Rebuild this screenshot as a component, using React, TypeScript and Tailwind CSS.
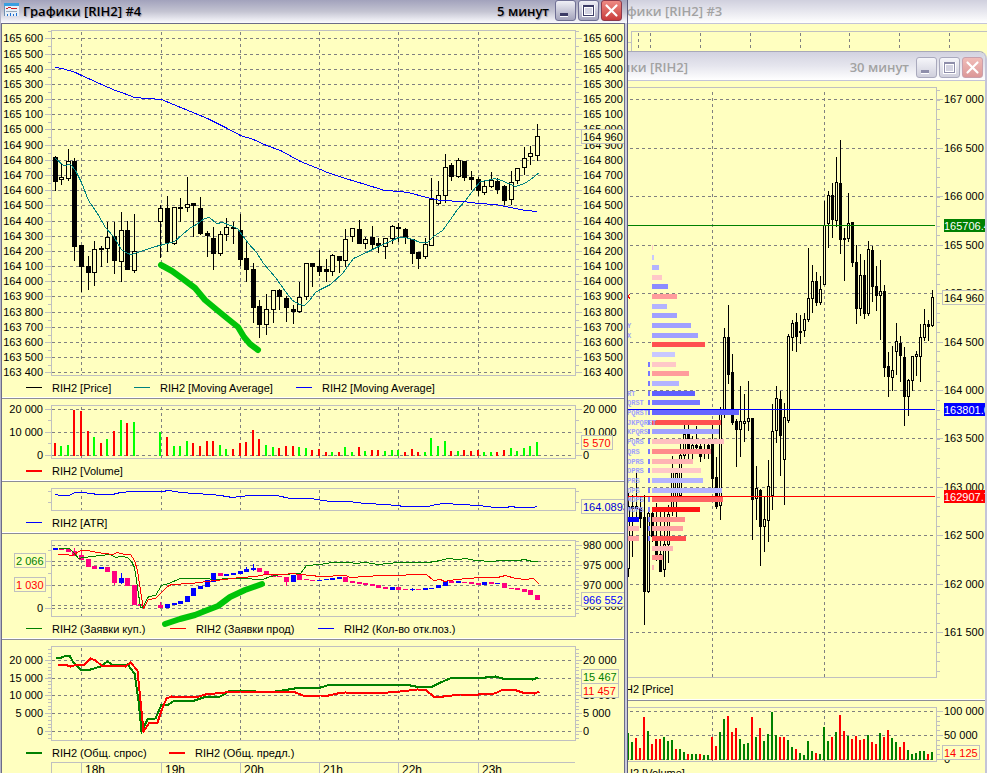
import React from "react";

type Pt = [number, number];
/** slot, high, body top, body bottom, low, filled */
type Candle = [number, number, number, number, number, 0 | 1];

const HOURS = [81, 161, 240, 319, 398, 478];
const GRID = "#808080";
const FRAME = "#c0c0c0";
const GREEN = "#008000";
const FONT = "font-['Liberation_Sans',sans-serif] text-[11px]";

/** x centre of a five-minute slot, counted from 18h */
const slotX = (n: number) => Math.round(81 + 6.61 * n);
/** finer units of the half-hour chart: three to a pixel */
const ux = (v: number) => 620 + Math.floor(v / 3);
const uy = (v: number) => 240 + Math.floor(v / 3);

const PRICE: Candle[] = [
  [-4, 156, 157, 181, 190, 1], [-3, 163, 177, 179, 184, 0], [-2, 149, 161, 178, 180, 0], [-1, 158, 161, 246, 260, 1],
  [0, 245, 245, 266, 291, 1], [1, 256, 266, 272, 289, 1], [2, 241, 249, 272, 285, 0], [3, 246, 248, 249, 266, 1],
  [4, 222, 237, 248, 262, 0], [5, 222, 236, 260, 273, 1], [6, 212, 230, 261, 281, 0], [7, 221, 230, 269, 269, 1],
  [8, 214, 251, 270, 272, 0], [12, 205, 208, 221, 257, 0], [13, 196, 208, 242, 251, 1], [14, 207, 207, 243, 244, 0],
  [15, 198, 207, 208, 221, 1], [16, 177, 204, 207, 211, 0], [17, 203, 203, 205, 236, 1], [18, 197, 208, 233, 234, 1],
  [19, 231, 233, 235, 256, 1], [20, 227, 238, 253, 269, 1], [21, 231, 234, 253, 255, 0], [22, 218, 227, 234, 240, 0],
  [23, 222, 227, 228, 243, 1], [24, 214, 230, 259, 265, 1], [25, 241, 258, 269, 281, 1], [26, 263, 269, 307, 322, 1],
  [27, 300, 306, 324, 337, 1], [28, 294, 309, 324, 334, 0], [29, 290, 290, 309, 322, 0], [30, 289, 290, 296, 309, 1],
  [31, 296, 298, 307, 321, 1], [32, 305, 309, 311, 323, 1], [33, 282, 297, 311, 312, 0], [34, 263, 263, 296, 299, 0],
  [35, 263, 263, 266, 286, 1], [36, 250, 266, 271, 275, 1], [37, 259, 269, 271, 281, 1], [38, 254, 255, 271, 275, 0],
  [39, 256, 256, 260, 272, 1], [40, 229, 239, 260, 266, 0], [41, 228, 228, 236, 241, 0], [42, 220, 229, 243, 243, 1],
  [43, 237, 239, 243, 248, 0], [44, 226, 237, 244, 248, 1], [45, 238, 243, 245, 252, 1], [46, 238, 238, 246, 258, 0],
  [47, 225, 226, 238, 243, 0], [48, 223, 227, 228, 241, 1], [49, 228, 229, 237, 243, 1], [50, 239, 239, 253, 263, 1],
  [51, 252, 252, 258, 268, 1], [52, 238, 244, 256, 258, 0], [53, 178, 199, 245, 245, 0], [54, 181, 195, 203, 204, 0],
  [55, 154, 167, 195, 202, 0], [56, 163, 165, 176, 180, 1], [57, 158, 160, 176, 177, 0], [58, 161, 161, 177, 180, 1],
  [59, 171, 177, 179, 189, 1], [60, 177, 179, 190, 195, 1], [61, 181, 186, 192, 194, 0], [62, 172, 180, 186, 187, 0],
  [63, 178, 181, 189, 193, 1], [64, 185, 186, 200, 204, 1], [65, 171, 182, 199, 204, 0], [66, 168, 168, 180, 183, 0],
  [67, 147, 158, 167, 174, 0], [68, 146, 153, 156, 164, 0], [69, 124, 136, 155, 160, 0],
];

const MA_SLOW: Pt[] = [[55, 67], [62, 68], [75, 72], [81, 75], [88, 78], [101, 84], [115, 90], [121, 92], [134, 97], [161, 99], [173, 104], [190, 111], [207, 118], [225, 127], [240, 135], [253, 139], [266, 145], [280, 150], [300, 161], [320, 169], [327, 172], [345, 178], [365, 184], [384, 190], [400, 191], [412, 193], [422, 196], [440, 200], [462, 201], [478, 203], [495, 204], [515, 208], [525, 210], [537, 211]];
const MA_FAST: Pt[] = [[55, 158], [63, 165], [70, 164], [75, 170], [81, 182], [88, 200], [97, 213], [105, 227], [113, 236], [121, 249], [127, 253], [131, 254], [143, 250], [155, 246], [163, 244], [174, 241], [182, 234], [189, 228], [196, 224], [204, 218], [209, 217], [216, 223], [222, 222], [230, 225], [237, 228], [242, 235], [248, 243], [256, 252], [263, 263], [275, 277], [285, 291], [292, 300], [299, 304], [304, 305], [309, 300], [315, 292], [320, 289], [330, 284], [342, 273], [353, 258], [366, 252], [380, 245], [392, 240], [398, 237], [405, 237], [412, 239], [420, 242], [427, 242], [433, 236], [442, 230], [450, 219], [457, 209], [465, 200], [475, 187], [480, 181], [487, 180], [494, 178], [501, 180], [508, 183], [515, 186], [524, 183], [530, 179], [539, 172]];
const ATR: Pt[] = [[55, 494], [60, 495], [69, 495], [74, 492], [82, 492], [98, 494], [112, 494], [120, 492], [132, 491], [162, 491], [168, 490], [180, 492], [195, 493], [210, 494], [220, 495], [232, 497], [240, 496], [250, 495], [276, 495], [290, 498], [310, 498], [322, 500], [330, 501], [348, 501], [365, 503], [385, 504], [405, 506], [428, 506], [435, 504], [445, 503], [460, 504], [478, 505], [495, 507], [505, 507], [511, 506], [517, 507], [532, 507], [537, 506]];
const BIDS: Pt[] = [[58, 548], [69, 548], [74, 553], [78, 558], [83, 557], [92, 556], [100, 555], [110, 554], [115, 557], [121, 556], [127, 557], [131, 561], [134, 567], [136, 580], [140, 607], [142, 607], [148, 596], [155, 595], [161, 585], [168, 583], [180, 578], [208, 578], [213, 580], [225, 578], [240, 578], [262, 579], [270, 576], [280, 574], [300, 573], [306, 565], [320, 564], [332, 562], [350, 562], [355, 563], [365, 562], [378, 564], [398, 562], [428, 562], [440, 560], [447, 558], [458, 559], [465, 558], [475, 560], [492, 561], [500, 560], [518, 560], [524, 559], [532, 561], [537, 561]];
const ASKS: Pt[] = [[57, 554], [65, 554], [72, 555], [80, 550], [87, 550], [97, 552], [112, 554], [117, 552], [124, 554], [130, 554], [134, 560], [137, 570], [140, 590], [143, 608], [148, 599], [155, 598], [162, 591], [167, 586], [171, 584], [190, 583], [215, 580], [240, 577], [255, 576], [265, 574], [285, 574], [290, 573], [320, 576], [345, 575], [350, 577], [380, 575], [402, 575], [410, 574], [426, 574], [433, 580], [440, 579], [444, 581], [455, 579], [468, 578], [480, 577], [497, 577], [505, 575], [515, 578], [525, 579], [533, 578], [539, 584]];
const DEMAND: Pt[] = [[55, 657], [61, 657], [66, 655], [69, 655], [73, 662], [80, 669], [90, 669], [100, 666], [107, 661], [113, 665], [127, 664], [134, 673], [138, 700], [141, 731], [147, 719], [155, 718], [161, 704], [168, 704], [174, 700], [194, 700], [203, 697], [220, 696], [228, 691], [240, 690], [255, 691], [275, 691], [288, 689], [300, 687], [320, 687], [330, 684], [405, 684], [415, 686], [432, 686], [440, 682], [452, 677], [485, 677], [495, 676], [502, 678], [525, 678], [532, 679], [538, 677]];
const SUPPLY: Pt[] = [[57, 664], [64, 664], [70, 666], [77, 664], [84, 664], [90, 658], [95, 660], [101, 665], [115, 665], [125, 666], [130, 662], [137, 670], [140, 700], [143, 731], [149, 722], [157, 722], [161, 710], [166, 698], [171, 696], [195, 697], [205, 694], [225, 692], [240, 691], [270, 691], [295, 692], [305, 696], [320, 695], [328, 695], [337, 693], [345, 692], [375, 693], [400, 691], [417, 689], [426, 690], [433, 696], [443, 696], [460, 694], [478, 694], [494, 693], [503, 689], [513, 689], [522, 692], [534, 693], [539, 691]];

/** slot, top, up/down */
const VOLUME: [number, number, "g" | "r"][] = [
  [-4, 443, "r"], [-3, 446, "g"], [-2, 445, "g"], [-1, 410, "r"], [0, 411, "r"], [1, 431, "r"], [2, 437, "g"], [3, 443, "r"],
  [4, 439, "g"], [5, 431, "r"], [6, 420, "g"], [7, 423, "r"], [8, 422, "g"], [12, 432, "g"], [13, 437, "r"], [14, 446, "g"],
  [15, 446, "g"], [16, 441, "g"], [17, 443, "r"], [18, 446, "r"], [19, 441, "r"], [20, 441, "r"], [21, 445, "g"], [22, 449, "g"],
  [23, 449, "r"], [24, 443, "r"], [25, 442, "r"], [26, 430, "r"], [27, 439, "r"], [28, 445, "g"], [29, 447, "g"], [30, 448, "r"],
  [31, 446, "r"], [32, 446, "r"], [33, 447, "g"], [34, 448, "g"], [35, 450, "r"], [36, 449, "r"], [37, 452, "r"], [38, 452, "g"],
  [39, 452, "r"], [40, 447, "g"], [41, 452, "g"], [42, 447, "r"], [43, 451, "g"], [44, 450, "r"], [45, 450, "r"], [46, 451, "g"],
  [47, 450, "g"], [48, 450, "g"], [49, 452, "r"], [50, 449, "r"], [51, 452, "r"], [52, 452, "g"], [53, 438, "g"], [54, 446, "g"],
  [55, 441, "g"], [56, 451, "r"], [57, 451, "g"], [58, 450, "r"], [59, 451, "r"], [60, 450, "r"], [61, 452, "g"], [62, 452, "g"],
  [63, 452, "r"], [64, 450, "r"], [65, 448, "g"], [66, 451, "g"], [67, 448, "g"], [68, 446, "g"], [69, 442, "g"],
];

/** slot, body top, body bottom, blue/pink, optional wick */
const INTEREST: [number, number, number, "b" | "p", number?, number?][] = [
  [-4, 548, 550, "b"], [-3, 548, 550, "p"], [-2, 549, 552, "p"], [-1, 551, 556, "p", 548, 556], [0, 555, 560, "p", 550, 560],
  [1, 559, 567, "p"], [2, 566, 569, "p"], [3, 567, 569, "b"], [4, 567, 572, "p"], [5, 571, 583, "p", 571, 585],
  [6, 578, 583, "b", 573, 584], [7, 578, 586, "p"], [8, 585, 605, "p"], [9, 604, 606, "p"], [12, 605, 608, "p", 602, 608],
  [13, 604, 608, "b"], [14, 603, 605, "b"], [15, 601, 604, "b"], [16, 596, 602, "b"], [17, 588, 596, "b"], [18, 586, 589, "b"],
  [19, 580, 587, "b"], [20, 573, 582, "b"], [21, 573, 576, "p"], [22, 574, 576, "b"], [23, 573, 575, "b"], [24, 571, 574, "b"],
  [25, 569, 572, "b", 567, 572], [26, 568, 570, "b", 564, 571], [27, 568, 572, "p"], [28, 571, 575, "p"], [29, 575, 577, "p"],
  [30, 576, 577, "p"], [31, 577, 582, "p", 577, 586], [32, 575, 582, "b"], [33, 575, 580, "p"], [34, 579, 580, "p"],
  [35, 580, 581, "p"], [36, 580, 581, "b"], [37, 579, 580, "b"], [38, 578, 580, "b"], [39, 577, 579, "b"], [40, 577, 582, "p"],
  [41, 581, 583, "p"], [42, 582, 584, "p"], [43, 583, 585, "p"], [44, 584, 586, "p"], [45, 585, 588, "p"], [46, 587, 589, "p"],
  [47, 587, 590, "b"], [48, 587, 590, "p"], [49, 589, 590, "p"], [50, 589, 590, "b", 588, 591], [51, 589, 590, "p"],
  [52, 588, 590, "b"], [53, 588, 589, "b"], [54, 585, 588, "b"], [55, 581, 586, "b"], [56, 581, 583, "p"], [57, 581, 583, "b"],
  [58, 582, 583, "p"], [59, 582, 584, "p"], [60, 583, 585, "p"], [61, 582, 585, "b"], [62, 582, 584, "p"], [63, 583, 584, "b"],
  [64, 583, 588, "p"], [65, 588, 589, "p"], [66, 588, 590, "p"], [67, 589, 592, "p"], [68, 590, 595, "p"], [69, 595, 600, "p"],
];

const HALF_HOUR: Candle[] = [
  [25, 760, 800, 986, 1010, 0], [37, 765, 800, 806, 950, 1], [49, 700, 800, 806, 830, 1], [61, 770, 806, 836, 862, 1],
  [73, 765, 832, 1053, 1152, 1], [85, 815, 820, 1055, 1058, 0], [97, 812, 820, 890, 905, 1], [109, 790, 890, 945, 960, 1],
  [121, 815, 943, 993, 993, 1], [133, 803, 913, 988, 1010, 0], [145, 795, 823, 912, 968, 0], [157, 648, 695, 815, 825, 0],
  [169, 690, 700, 780, 830, 0], [181, 600, 645, 765, 770, 0], [193, 555, 583, 647, 655, 0], [205, 555, 583, 625, 660, 1],
  [217, 590, 615, 628, 655, 0], [229, 560, 615, 622, 628, 1], [241, 610, 618, 648, 665, 1], [253, 608, 630, 640, 655, 0],
  [265, 600, 615, 630, 655, 1], [277, 540, 613, 716, 745, 1], [289, 652, 711, 798, 806, 1], [301, 502, 510, 797, 837, 0],
  [313, 264, 291, 508, 533, 0], [325, 195, 291, 402, 430, 1], [337, 342, 396, 546, 552, 1], [349, 537, 543, 567, 678, 1],
  [361, 440, 543, 567, 648, 0], [373, 462, 543, 551, 603, 0], [385, 423, 535, 545, 570, 0], [397, 534, 534, 777, 897, 1],
  [409, 678, 744, 775, 837, 0], [421, 747, 750, 860, 975, 1], [433, 770, 837, 860, 935, 0], [445, 662, 738, 842, 903, 0],
  [457, 492, 573, 767, 807, 0], [469, 438, 475, 572, 608, 0], [481, 453, 477, 585, 705, 1], [493, 490, 531, 657, 793, 0],
  [505, 282, 288, 540, 548, 0], [517, 240, 250, 293, 330, 0], [529, 220, 246, 288, 335, 1], [541, 225, 273, 278, 309, 1],
  [553, 220, 237, 272, 288, 0], [565, 25, 175, 237, 243, 0], [577, 75, 123, 175, 218, 0], [589, 96, 123, 187, 197, 1],
  [601, 110, 148, 187, 194, 0], [613, -117, -44, 133, 133, 0], [625, -147, -134, -50, 23, 0], [637, -171, -134, -62, -7, 1],
  [649, -249, -173, -59, -40, 0], [661, -300, -171, -2, 41, 1], [673, -35, -6, -4, 122, 1], [685, -140, -50, -5, 5, 0],
  [697, -53, -53, 68, 80, 1], [709, 15, 67, 206, 251, 1], [721, 42, 106, 206, 226, 0], [733, 60, 106, 221, 236, 1],
  [745, 3, 28, 221, 227, 0], [757, 18, 31, 140, 185, 1], [769, 78, 139, 166, 212, 1], [781, 60, 154, 166, 297, 0],
  [793, 135, 154, 383, 408, 1], [805, 337, 379, 409, 470, 1], [817, 318, 391, 412, 450, 0], [829, 249, 304, 335, 402, 0],
  [841, 290, 310, 347, 425, 1], [853, 322, 352, 470, 557, 1], [865, 418, 421, 469, 527, 0], [877, 349, 349, 421, 450, 0],
  [889, 334, 343, 349, 405, 0], [901, 253, 293, 350, 425, 0], [913, 207, 253, 292, 302, 0], [925, 240, 253, 260, 302, 1],
  [937, 150, 172, 257, 260, 0],
];

/** market profile rows: centre, right edge, colour, letters */
const PROFILE: [number, number, string, string?][] = [
  [52, 102, "#c8c8ff"], [82, 117, "#b4b4ff"], [112, 126, "#ffc8c8"], [139, 144, "#8c8cff"],
  [22, 99, "#ffc8c8"], [169, 171, "#ff9c9c"], [199, 141, "#b4b4ff"], [226, 171, "#a0a0ff"], [256, 213, "#a0a0ff", "Y"],
  [286, 234, "#a0a0ff", "X"], [313, 255, "#ff5050"], [343, 165, "#c8c8ff"], [373, 168, "#ffc8c8"], [400, 207, "#ff9c9c"],
  [430, 177, "#b4b4ff"], [460, 225, "#6060ff", "RT"], [487, 240, "#7878ff", "QRST"], [517, 357, "#6464ff", "PQRST"],
  [547, 303, "#ff5050", "JKPQRST"], [574, 297, "#a0a0ff", "KPQRS"], [604, 312, "#ffc0c0", "PQRS"], [634, 273, "#ff8c8c", "QRS"],
  [664, 219, "#ffb4b4", "OPRS"], [691, 243, "#ffc8c8", "OPRS"], [721, 249, "#b4b4ff", "PRS"], [751, 306, "#b4b4ff", "OPS"],
  [778, 309, "#ff6464", "MOPS"], [808, 240, "#ff1414", "MOPS"], [838, 195, "#ff8c8c"], [865, 189, "#ffa0a0"],
  [895, 198, "#ff5050"], [925, 159, "#ffb4b4"], [952, 129, "#ff8c8c"], [982, 102, "#ffb4b4"],
];

/** tops of the half-hour volume bars, one every four pixels */
const HALF_VOLUME =
  "g579 g606 r595 r624 r531 g573 r612 r597 r597 g591 g603 g600 r627 g627 g636 r642 g642 g642 r642 g645 g645 r591 r618 g576 g537 r528 r576 r564 g597 g612 g609 r531 g591 r564 g603 g582 g516 g585 r591 r591 g600 g621 r627 g639 g645 g603 g633 r639 g642 g561 g603 r591 g576 r525 r573 g588 r597 r588 r600 r597 g585 r606 r612 g579 r591 r570 g594 g606 r621 r606 g630 g642 g639 g633 g633 r642 g636".split(" ");

const range = (from: number, to: number, step: number) => {
  const out: number[] = [];
  for (let v = from; v <= to + 0.01; v += step) out.push(Math.round(v));
  return out;
};

function HLine({ y, x1, x2, color = GRID, dash = true }: { y: number; x1: number; x2: number; color?: string; dash?: boolean }) {
  return <line x1={x1} x2={x2} y1={y + 0.5} y2={y + 0.5} stroke={color} strokeDasharray={dash ? "3 3" : undefined} />;
}

function VLine({ x, y1, y2 }: { x: number; y1: number; y2: number }) {
  return <line x1={x + 0.5} x2={x + 0.5} y1={y1} y2={y2} stroke={GRID} strokeDasharray="3 3" />;
}

function Ticks({ ys, x, len }: { ys: number[]; x: number; len: number }) {
  return <>{ys.map((y) => <rect key={y} x={x} y={y} width={len} height={1} fill={FRAME} />)}</>;
}

function Label({ x, y, children, end, color = "#000" }: { x: number; y: number; children: string; end?: boolean; color?: string }) {
  return <text x={x} y={y + 4} fill={color} textAnchor={end ? "end" : "start"}>{children}</text>;
}

function Tag({ x, y, w, color, children }: { x: number; y: number; w: number; color: string; children: string }) {
  return (
    <g>
      <rect x={x + 0.5} y={y + 0.5} width={w} height={14} fill="#ffffc0" stroke={FRAME} />
      <Label x={x + 2} y={y + 8} color={color}>{children}</Label>
    </g>
  );
}

function Trace({ pts, color, width = 1 }: { pts: Pt[]; color: string; width?: number }) {
  return <polyline points={pts.map(([x, y]) => `${x + 0.5},${y + 0.5}`).join(" ")} fill="none" stroke={color} strokeWidth={width} />;
}

function Chart({ x, y, w, h, label, children }: { x: number; y: number; w: number; h: number; label: string; children: React.ReactNode }) {
  return (
    <svg role="img" aria-label={label} width={w} height={h} viewBox={`${x} ${y} ${w} ${h}`} shapeRendering="crispEdges" className="block shrink-0 overflow-visible">
      {children}
    </svg>
  );
}

function Frame({ x, y, w, h }: { x: number; y: number; w: number; h: number }) {
  return <rect x={x + 0.5} y={y + 0.5} width={w} height={h} fill="none" stroke={FRAME} />;
}

function Legend({ items }: { items: { name: string; color: string; thick?: boolean; w: string }[] }) {
  return (
    <ul className="flex h-[19px] items-center pt-px pl-6 leading-none">
      {items.map((it) => (
        <li key={it.name + it.color} className={`flex shrink-0 items-center gap-2.5 whitespace-nowrap ${it.w}`}>
          <svg width="16" height="2" className="shrink-0" aria-hidden="true">
            <rect width="16" height={it.thick ? 2 : 1} fill={it.color} />
          </svg>
          {it.name}
        </li>
      ))}
    </ul>
  );
}

function Panel({ children, last }: { children: React.ReactNode; last?: boolean }) {
  return (
    <section className={last ? "" : "border-b border-[#8c8c98]"}>
      <div className={last ? "" : "border-b border-white"}>{children}</div>
    </section>
  );
}

function WindowButtons({ active }: { active: boolean }) {
  const plain = active
    ? "border-[#6f6f94] bg-linear-to-b from-[#f0f0f6] to-[#a4a4bc]"
    : "border-[#a9a9bd] bg-linear-to-b from-[#f6f6fa] to-[#cfcfdc]";
  const close = active
    ? "border-[#8c3a4c] bg-linear-to-b from-[#ee8a84] to-[#c83a3c]"
    : "border-[#c9a0ac] bg-linear-to-b from-[#f0bcb8] to-[#dc9898]";
  const ink = active ? "#3c3c66" : "#8e8eaa";
  return (
    <div className="flex gap-[2px]">
      <button aria-label="Свернуть" className={`size-[21px] rounded-[3px] border ${plain}`}>
        <svg width="19" height="19" shapeRendering="crispEdges"><rect x="4" y="12" width="8" height="3" fill={ink} /><rect x="4" y="15" width="8" height="1" fill="#fff" /></svg>
      </button>
      <button aria-label="Развернуть" className={`size-[21px] rounded-[3px] border ${plain}`}>
        <svg width="19" height="19" shapeRendering="crispEdges"><rect x="3" y="4" width="13" height="12" fill="#fff" /><rect x="6" y="7" width="7" height="6" fill="#d4d4e2" /><rect x="4.5" y="4.5" width="10" height="10" fill="none" stroke={ink} /><rect x="4" y="4" width="11" height="2" fill={ink} /></svg>
      </button>
      <button aria-label="Закрыть" className={`size-[21px] rounded-[3px] border ${close}`}>
        <svg width="19" height="19"><path d="M4.500 4.500l10 10M14.500 4.500l-10 10" stroke="#fff" strokeWidth="2.200" strokeLinecap="round" /></svg>
      </button>
    </div>
  );
}

const TITLE = "font-['Open_Sans','Noto_Sans',sans-serif] text-[13px] font-semibold leading-none";

function FrontWindow() {
  const levels = Array.from({ length: 23 }, (_, i) => ({ y: Math.round(38.35 + 15.18 * i), text: `${165600 - i * 100}`.replace(/(\d{3})$/, " $1") }));
  const mids = levels.slice(0, -1).map((l) => l.y + 8).concat(31);
  return (
    <article className="absolute inset-y-0 left-0 flex w-[628px] flex-col overflow-hidden border-x border-l-[#b4b4c8] border-r-[#5c5c7c] bg-[#c9c9dc]">
      <header className="flex h-[23px] shrink-0 items-center bg-linear-to-b from-[#a2a2bc] via-[#c4c4d2] to-[#fbfbff] pr-[5px] pl-[3px]">
        <svg width="15" height="13" shapeRendering="crispEdges" className="-mt-1" aria-hidden="true">
          <rect width="15" height="13" fill="#e8f0f8" stroke="#6f8fb0" /><rect width="15" height="3" fill="#3aa0e0" />
          <path d="M2 5h2l2-1 2 2 2-1h3" stroke="#d02020" fill="none" /><path d="M2 8h11" stroke="#9ab" />
          <path d="M3.500 13v-2M6.500 13v-3M9.500 13v-2M12.500 13v-3" stroke="#2070d0" />
        </svg>
        <h1 className={`ml-1 flex-1 truncate ${TITLE} [text-shadow:1px_1px_1px_#9a9aae]`}>Графики [RIH2] #4</h1>
        <span className={`mr-1.5 ${TITLE} [text-shadow:1px_1px_1px_#9a9aae]`}>5 минут</span>
        <div className="-mt-[3px]"><WindowButtons active /></div>
      </header>
      <main className={`mr-[2px] min-h-0 flex-1 overflow-hidden border-x border-t border-[#6c6c88] bg-[#ffffc0] ${FONT}`}>
        <Panel>
          <Chart x={2} y={24} w={622} h={354} label="RIH2 [Price]">
            <Frame x={51} y={30} w={524} h={345} />
            {levels.map((l) => (
              <g key={l.y}>
                <HLine y={l.y} x1={52} x2={572} />
                <Label x={43} y={l.y} end>{l.text}</Label>
                <Label x={583} y={l.y}>{l.text}</Label>
              </g>
            ))}
            {HOURS.map((x) => <VLine key={x} x={x} y1={32} y2={375} />)}
            <Ticks ys={levels.map((l) => l.y)} x={45} len={6} />
            <Ticks ys={levels.map((l) => l.y)} x={576} len={6} />
            <Ticks ys={mids} x={48} len={3} />
            <Ticks ys={mids} x={576} len={3} />
            {PRICE.map(([n, hi, top, bot, lo, filled]) => (
              <g key={n}>
                <rect x={slotX(n)} y={hi} width={1} height={lo - hi + 1} fill="#000" />
                <rect x={slotX(n) - 1.5} y={top + 0.5} width={4} height={Math.max(bot - top, 1)} fill={filled ? "#000" : "#ffffc0"} stroke="#000" />
              </g>
            ))}
            <Trace pts={MA_FAST} color="#008080" />
            <Trace pts={MA_SLOW} color="#0000ff" />
            <polyline points="161,265 172,271 183,279 195,288 205,300 217,310 228,319 238,327 244,337 250,344 258,350" fill="none" stroke="#00c408" strokeWidth="6" strokeLinecap="round" strokeLinejoin="round" shapeRendering="auto" />
            <Tag x={581} y={129} w={50} color="#000">164 960</Tag>
          </Chart>
          <Legend items={[{ name: "RIH2 [Price]", color: "#000", w: "w-[108px]" }, { name: "RIH2 [Moving Average]", color: "#008080", w: "w-[162px]" }, { name: "RIH2 [Moving Average]", color: "#0000ff", w: "" }]} />
        </Panel>
        <Panel>
          <Chart x={2} y={399} w={622} h={62} label="RIH2 [Volume]">
            <Frame x={51} y={405} w={524} h={53} />
            {[[409, "20 000"], [432, "10 000"], [455, "0"]].map(([y, t]) => (
              <g key={t}>
                <HLine y={+y} x1={52} x2={572} />
                <Label x={43} y={+y} end>{`${t}`}</Label>
                <Label x={583} y={+y}>{`${t}`}</Label>
              </g>
            ))}
            {HOURS.map((x) => <VLine key={x} x={x} y1={407} y2={458} />)}
            {[45, 576].map((x) => <Ticks key={x} ys={[409, 432, 455]} x={x} len={6} />)}
            <Ticks ys={[420, 443]} x={48} len={3} />
            <Ticks ys={[420, 443]} x={576} len={3} />
            {VOLUME.map(([n, top, c]) => <rect key={n} x={slotX(n) - 1} y={top} width={2} height={456 - top} fill={c === "g" ? "#00ff00" : "#ff0000"} />)}
            <Tag x={581} y={435} w={31} color="#f00">5 570</Tag>
          </Chart>
          <Legend items={[{ name: "RIH2 [Volume]", color: "#ff0000", thick: true, w: "" }]} />
        </Panel>
        <Panel>
          <Chart x={2} y={482} w={622} h={31} label="RIH2 [ATR]">
            <Frame x={51} y={488} w={524} h={22} />
            {HOURS.map((x) => <VLine key={x} x={x} y1={490} y2={510} />)}
            <Ticks ys={[491, 502]} x={48} len={3} />
            <Ticks ys={[491, 502]} x={576} len={3} />
            <Trace pts={ATR} color="#0000ff" />
            <Tag x={581} y={499} w={50} color="#0000d8">164.0893</Tag>
          </Chart>
          <Legend items={[{ name: "RIH2 [ATR]", color: "#0000ff", w: "" }]} />
        </Panel>
        <Panel>
          <Chart x={2} y={534} w={622} h={85} label="RIH2 (Заявки)">
            <Frame x={51} y={540} w={524} h={76} />
            {[545, 561, 565, 585, 605, 608].map((y) => <HLine key={y} y={y} x1={52} x2={572} />)}
            {HOURS.map((x) => <VLine key={x} x={x} y1={542} y2={616} />)}
            <Ticks ys={[561, 585, 608]} x={45} len={6} />
            <Ticks ys={[550, 573, 597]} x={48} len={3} />
            <Ticks ys={[545, 565, 585, 605]} x={576} len={6} />
            <Ticks ys={range(541, 614, 4)} x={576} len={3} />
            <Label x={43} y={608} end>0</Label>
            <Label x={583} y={545}>980 000</Label>
            <Label x={583} y={565}>975 000</Label>
            <Label x={583} y={585}>970 000</Label>
            <Label x={583} y={606}>965 000</Label>
            {INTEREST.map(([n, top, bot, c, hi, lo]) => (
              <g key={n} fill={c === "b" ? "#0000ff" : "#ff0080"}>
                <rect x={slotX(n) - 2} y={top} width={5} height={bot - top} />
                {hi && lo && <rect x={slotX(n)} y={hi} width={1} height={lo - hi} />}
              </g>
            ))}
            <Trace pts={BIDS} color={GREEN} />
            <Trace pts={ASKS} color="#ff0000" />
            <polyline points="165,624 180,619 195,615 205,611 218,606 230,597 245,590 262,584" fill="none" stroke="#00c408" strokeWidth="6" strokeLinecap="round" strokeLinejoin="round" shapeRendering="auto" />
            <Tag x={14} y={553} w={31} color={GREEN}>2 066</Tag>
            <Tag x={14} y={577} w={31} color="#f00">1 030</Tag>
            <Tag x={581} y={592} w={50} color="#0000ff">966 552</Tag>
          </Chart>
          <Legend items={[{ name: "RIH2 (Заявки куп.)", color: GREEN, w: "w-[144px]" }, { name: "RIH2 (Заявки прод)", color: "#ff0000", w: "w-[148px]" }, { name: "RIH2 (Кол-во отк.поз.)", color: "#0000ff", w: "" }]} />
        </Panel>
        <Panel last>
          <Chart x={2} y={640} w={622} h={103} label="RIH2 (Общ. спрос, предл.)">
            <Frame x={51} y={646} w={524} h={94} />
            {[[660, "20 000"], [678, "15 000"], [695, "10 000"], [713, "5 000"], [731, "0"]].map(([y, t]) => (
              <g key={t}>
                <HLine y={+y} x1={52} x2={572} />
                <Label x={43} y={+y} end>{`${t}`}</Label>
                <Label x={583} y={+y}>{`${t}`}</Label>
              </g>
            ))}
            {HOURS.map((x) => <VLine key={x} x={x} y1={648} y2={740} />)}
            {[45, 576].map((x) => <Ticks key={x} ys={[660, 678, 695, 713, 731]} x={x} len={6} />)}
            <Ticks ys={range(649, 739, 3.55)} x={48} len={3} />
            <Ticks ys={range(649, 739, 3.55)} x={576} len={3} />
            <Trace pts={DEMAND} color={GREEN} width={2} />
            <Trace pts={SUPPLY} color="#ff0000" width={2} />
            <Tag x={581} y={669} w={37} color={GREEN}>15 467</Tag>
            <Tag x={581} y={683} w={37} color="#f00">11 457</Tag>
          </Chart>
          <Legend items={[{ name: "RIH2 (Общ. спрос)", color: GREEN, thick: true, w: "w-[143px]" }, { name: "RIH2 (Общ. предл.)", color: "#ff0000", thick: true, w: "" }]} />
          <Chart x={2} y={762} w={622} h={24} label="Время">
            <rect x={51} y={762} width={524} height={1} fill={FRAME} />
            {[51, ...HOURS].map((x) => <rect key={x} x={x} y={762} width={1} height={24} fill={FRAME} />)}
            {HOURS.map((x, i) => <text key={x} x={x + 4} y={774} className="text-[12px]">{`${18 + i}h`}</text>)}
          </Chart>
        </Panel>
      </main>
    </article>
  );
}

function BackWindow() {
  return (
    <article className="absolute inset-y-0 right-0 left-[580px] bg-[#ffffc0]">
      <header className="flex h-[24px] items-center border-b border-[#c4c4d8] bg-linear-to-b from-[#d0d0de] to-white pl-6">
        <h2 className={`${TITLE} text-[#a2a2a2]`}>Графики [RIH2] #3</h2>
      </header>
      <div className="pl-12">
        <Chart x={628} y={24} w={359} h={30} label="RIH2">
          <path d="M631.500 60V31.500H990M628 42.500h3" fill="none" stroke={FRAME} />
          {[638, 650, 700, 750, 800, 849, 899, 949].map((x) => <VLine key={x} x={x} y1={33} y2={54} />)}
        </Chart>
      </div>
    </article>
  );
}

function HalfHourWindow() {
  const levels = Array.from({ length: 12 }, (_, i) => ({ y: Math.round(99.4 + 48.42 * i), text: `${167000 - i * 500}`.replace(/(\d{3})$/, " $1") }));
  return (
    <article className="absolute top-[51px] right-0 bottom-0 left-[570px] overflow-hidden rounded-tr-[8px] border-t border-r-2 border-[#c4c4d8] border-t-[#a8a8b8] bg-[#ffffc0]">
      <header className="flex h-[29px] items-center border-b border-[#c4c4d8] bg-linear-to-b from-[#d2d2e0] via-[#e6e6ee] to-white pt-0.5 pr-0.5 pl-[19px]">
        <h2 className={`flex-1 ${TITLE} text-[#a2a2a2]`}>Графики [RIH2]</h2>
        <span className={`mr-[7px] ${TITLE} text-[#a2a2a2]`}>30 минут</span>
        <WindowButtons active={false} />
      </header>
      <div className={`pl-[58px] ${FONT}`}>
        <Chart x={628} y={81} w={357} h={599} label="RIH2 [Price]">
          <path d="M628 87.500H936.500V677.500H628" fill="none" stroke={FRAME} />
          {levels.map((l) => (
            <g key={l.y}>
              <HLine y={l.y} x1={630} x2={934} />
              <Label x={944} y={l.y}>{l.text}</Label>
            </g>
          ))}
          <VLine x={712} y1={92} y2={677} />
          <VLine x={824} y1={92} y2={677} />
          <Ticks ys={range(90, 675, 9.684)} x={937} len={3} />
          <Ticks ys={levels.map((l) => l.y)} x={937} len={6} />
          {HALF_HOUR.map(([cx, hi, top, bot, lo, filled]) => (
            <g key={cx}>
              <rect x={ux(cx)} y={uy(hi)} width={1} height={uy(lo) - uy(hi) + 1} fill="#000" />
              <rect x={ux(cx) - 0.5} y={uy(top) + 0.5} width={2} height={Math.max(uy(bot) - uy(top), 1)} fill={filled ? "#000" : "#ffffc0"} stroke="#000" />
            </g>
          ))}
          {PROFILE.map(([y, right, color, letters]) => (
            <g key={y}>
              <rect x={652} y={uy(y) - 2} width={ux(right) - 652} height={5} fill={color} />
              {y > 370 && y < 900 && <rect x={648} y={uy(y) - 2} width={2} height={5} fill="#7878ff" />}
              {letters && <text x={627} y={uy(y) + 3} fill="#a0a0ff" className="font-['Liberation_Mono',monospace] text-[7px] font-bold">{letters}</text>}
            </g>
          ))}
          <rect x={628} y={517} width={11} height={5} fill="#0000ff" />
          <rect x={628} y={526} width={11} height={5} fill="#ffb4b4" />
          <rect x={628} y={536} width={11} height={5} fill="#ffa0a0" />
          <path d="M630 294l-2 2l2 3" fill="none" stroke="#f00" />
          <HLine y={225} x1={628} x2={935} color={GREEN} dash={false} />
          <HLine y={409} x1={628} x2={935} color="#00f" dash={false} />
          <HLine y={496} x1={628} x2={935} color="#f00" dash={false} />
          <rect x={944} y={219} width={42} height={13} fill={GREEN} />
          <Label x={944} y={226} color="#fff">165706.4</Label>
          <rect x={944} y={403} width={42} height={13} fill="#00f" />
          <Label x={944} y={410} color="#fff">163801.0</Label>
          <rect x={944} y={490} width={42} height={13} fill="#f00" />
          <Label x={944} y={497} color="#fff">162907.7</Label>
          <Tag x={942} y={290} w={50} color="#000">164 960</Tag>
        </Chart>
        <div className="flex h-[20px] items-center border-b border-white leading-none"><span className="-ml-3.5">RIH2 [Price]</span></div>
        <div className="border-t border-[#8c8c98]">
          <Chart x={628} y={701} w={357} h={63} label="RIH2 [Volume]">
            <path d="M628 707.500H936.500V761.500H628" fill="none" stroke={FRAME} />
            {[[711, "100 000"], [735, "50 000"], [759, "0"]].map(([y, t]) => (
              <g key={t}>
                <HLine y={+y} x1={630} x2={934} />
                <Label x={944} y={+y}>{`${t}`}</Label>
              </g>
            ))}
            <VLine x={712} y1={710} y2={761} />
            <VLine x={824} y1={710} y2={761} />
            <Ticks ys={range(711, 760, 4.8)} x={937} len={3} />
            <Ticks ys={[711, 735, 759]} x={937} len={6} />
            {HALF_VOLUME.map((b, i) => {
              const top = 540 + Math.round(Number(b.slice(1)) / 3);
              return <rect key={i} x={627 + 4 * i} y={top} width={2} height={760 - top} fill={b[0] === "g" ? GREEN : "#ff0000"} />;
            })}
            <Tag x={942} y={745} w={37} color="#f00">14 125</Tag>
          </Chart>
          <div className="flex h-[19px] items-center leading-none"><span className="-ml-3.5">RIH2 [Volume]</span></div>
        </div>
      </div>
    </article>
  );
}

export default function App() {
  return (
    <div className="relative h-screen overflow-hidden bg-[#ffffc0] text-black">
      <BackWindow />
      <HalfHourWindow />
      <FrontWindow />
    </div>
  );
}
